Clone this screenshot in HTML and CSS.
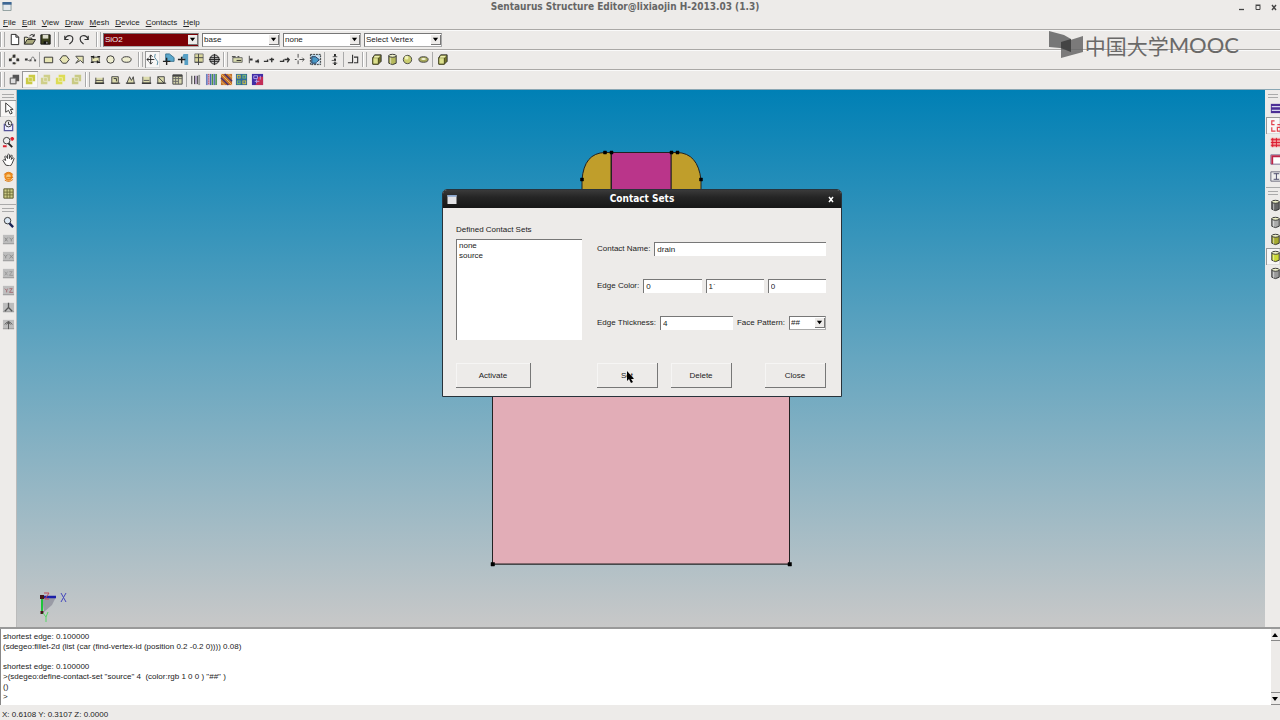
FILE: index.html
```html
<!DOCTYPE html>
<html lang="en">
<head>
<meta charset="utf-8">
<title>Sentaurus Structure Editor</title>
<link rel="stylesheet" href="styles.css">
</head>
<body>
<svg class="defs" aria-hidden="true">
  <symbol id="arrow" viewBox="0 0 8 8"><path d="M1 2h6L4 6z"/></symbol>
  <symbol id="layers" viewBox="0 0 14 14"><path d="M5 2h7v7H9v3H2V5h3z"/><path d="M5 5h4v4M5 5v4h4" fill="none" stroke="#fff" stroke-opacity=".5"/></symbol>
  <symbol id="cube" viewBox="0 0 14 14"><path d="M3 5l2-3h7v7l-3 3H3z" fill="#73752a" stroke="#333"/><path d="M3 5h6v7H3z" fill="#dce08c" stroke="#444419"/><path d="M5 3h6L9 5H4z" fill="#eef0ad"/></symbol>
  <symbol id="cylinder" viewBox="0 0 14 14"><path d="M3 3v8q4 3 8 0V3z" fill="currentColor" stroke="#333"/><ellipse cx="7" cy="3" rx="4" ry="1.6" fill="#eef0c8" stroke="#333"/><path d="M5 5v7" stroke="#fff" stroke-opacity=".6"/></symbol>
  <symbol id="plane" viewBox="0 0 14 14"><path d="M1 2h12v10H1z" fill="#bdbdbd"/><path d="M1 11.500h12" stroke="#999"/></symbol>
</svg>
<div class="app">
  <header class="titlebar">
    <svg class="winicon" viewBox="0 0 10 10"><path d="M.5.5h9v9h-9z" fill="#e4e8ec" stroke="#899"/><path d="M0 0h10v3H0z" fill="#3c6694"/></svg>
    <h1>Sentaurus Structure Editor@lixiaojin H-2013.03 (1.3)</h1>
    <div class="wincontrols">
      <button aria-label="Minimize"><svg viewBox="0 0 8 8"><path d="M1 6.500h5" stroke="#444" stroke-width="1.300"/></svg></button>
      <button aria-label="Maximize"><svg viewBox="0 0 8 8"><path d="M2 2.500h4v4H2z" fill="none" stroke="#444"/><path d="M1.500 2h5" stroke="#444"/></svg></button>
      <button aria-label="Close window"><svg viewBox="0 0 8 8"><path d="M2 2l4 5M6 2L2 7" stroke="#444" stroke-width="1.400"/></svg></button>
    </div>
  </header>
  <nav class="menubar">
    <button><u>F</u>ile</button><button><u>E</u>dit</button><button><u>V</u>iew</button><button><u>D</u>raw</button><button><u>M</u>esh</button><button><u>D</u>evice</button><button><u>C</u>ontacts</button><button><u>H</u>elp</button>
  </nav>

  <div class="toolbar">
    <span class="grip"></span>
    <div class="group n3">
      <button aria-label="New"><svg viewBox="0 0 14 14"><path d="M3.500 1.500h5l3 3v8h-8zM8.500 1.500v3h3" fill="#fff" stroke="#222"/></svg></button>
      <button aria-label="Open"><svg viewBox="0 0 14 14"><path d="M1.500 12V4.500h3l1 1h4V7" fill="#e9e7c0" stroke="#222"/><path d="M1.500 12l3-5h9l-3 5z" fill="#a9a87c" stroke="#222"/><path d="M7 3q3-3 5 0M12 1v2.500h-2" fill="none" stroke="#222"/></svg></button>
      <button aria-label="Save"><svg viewBox="0 0 14 14"><path d="M2 2h10v10H2z" fill="#3d421f" stroke="#111"/><path d="M4 2h6v4H4z" fill="#dcdccb"/><path d="M5 9h5v3H5z" fill="#111"/><path d="M8.500 9.500v2" stroke="#eee"/></svg></button>
    </div>
    <span class="grip"></span>
    <div class="group n2">
      <button aria-label="Undo"><svg viewBox="0 0 14 14"><path d="M3 3v4h4M3 7q2-5 6-4t2 6l-3 3" fill="none" stroke="#333" stroke-width="1.300"/></svg></button>
      <button aria-label="Redo"><svg viewBox="0 0 14 14"><path d="M11 3v4H7M11 7Q9 2 5 3t-2 6l3 3" fill="none" stroke="#333" stroke-width="1.300"/></svg></button>
    </div>
    <span class="grip wide"></span>
    <div class="combos">
      <span class="combo material"><select aria-label="Material"><option>SiO2</option></select><svg><use href="#arrow"/></svg></span>
      <span class="combo"><select aria-label="Region"><option>base</option></select><svg><use href="#arrow"/></svg></span>
      <span class="combo"><select aria-label="Contact set"><option>none</option></select><svg><use href="#arrow"/></svg></span>
      <span class="combo"><select aria-label="Selection mode"><option>Select Vertex</option></select><svg><use href="#arrow"/></svg></span>
    </div>
  </div>

  <div class="toolbar">
    <span class="grip"></span>
    <div class="group n2">
      <button aria-label="Vertex"><svg viewBox="0 0 14 14"><path d="M2 8l3-4M6 2h2M10 5l2 3M9 11l-2 1" stroke="#9a9a70" fill="none"/><path d="M1 6h3v3H1zM5 2h3v3H5zM9 6h3v3H9zM5 10h3v2H5z" fill="#333"/></svg></button>
      <button aria-label="Polyline"><svg viewBox="0 0 14 14"><path d="M1 7h3M6 8h2M11 8h2" stroke="#333" stroke-width="2"/><path d="M3 6q3 5 5 0t4 3" fill="none" stroke="#777"/></svg></button>
    </div>
    <span class="rule"></span>
    <div class="group n6">
      <button aria-label="Rectangle"><svg viewBox="0 0 14 14"><path d="M2.500 4.500h9v6h-9z" fill="#e7e5b4" stroke="#333"/></svg></button>
      <button aria-label="Polygon"><svg viewBox="0 0 14 14"><path d="M5 3h4l3 4-3 4H5L2 7z" fill="#e7e5b4" stroke="#333"/></svg></button>
      <button aria-label="Free polygon"><svg viewBox="0 0 14 14"><path d="M3 3.500h8V11L8 8l-5 3 3-4z" fill="#e7e5b4" stroke="#444"/></svg></button>
      <button aria-label="Region box"><svg viewBox="0 0 14 14"><path d="M3 4.500h8v5H3z" fill="#e7e5b4" stroke="#444"/><path d="M2 4h3M9 4h3M2 10h3M9 10h3M5 3v3M9 8v3" stroke="#222" stroke-width="1.300"/></svg></button>
      <button aria-label="Circle"><svg viewBox="0 0 14 14"><circle cx="7" cy="7" r="4" fill="#eeedcf" stroke="#333"/></svg></button>
      <button aria-label="Ellipse"><svg viewBox="0 0 14 14"><ellipse cx="7" cy="7" rx="5" ry="3" fill="#eeedcf" stroke="#333"/></svg></button>
    </div>
    <span class="grip wide"></span>
    <div class="group n5">
      <button class="on" aria-label="Move point"><svg viewBox="0 0 14 14"><path d="M1 7h8M5 3v8M3 5l-2 2 2 2M4 4l1-2 2 2M4 10l1 2 2-2" fill="none" stroke="#222"/><path d="M10 1q-2 4 1 6t1 6" fill="none" stroke="#5089a2"/></svg></button>
      <button aria-label="Move shape"><svg viewBox="0 0 14 14"><path d="M4 1h4l5 4v4H4z" fill="#5ba8cc" stroke="#38718f"/><path d="M1 9h8M5 5v8" stroke="#222" stroke-width="1.500"/></svg></button>
      <button aria-label="Move edge"><svg viewBox="0 0 14 14"><path d="M7 1h5v12H8V6H5z" fill="#579fc4"/><path d="M1 7h8M5 4v7" stroke="#222" stroke-width="1.500"/></svg></button>
      <button aria-label="Move grid"><svg viewBox="0 0 14 14"><path d="M3 1h9v9H3z" fill="#d9d69c" stroke="#777"/><path d="M3 5h9M7 1v9M3 10h8M7 6v7" stroke="#444"/></svg></button>
      <button aria-label="Move all"><svg viewBox="0 0 14 14"><circle cx="7" cy="7" r="5" fill="#bbb" stroke="#222"/><path d="M1 7h12M7 1v12M2 5h10M2 9h10" stroke="#222"/></svg></button>
    </div>
    <span class="grip"></span>
    <div class="group n6">
      <button aria-label="Split"><svg viewBox="0 0 14 14"><path d="M2 5h10v5H2z" fill="#d8dbad" stroke="#666"/><path d="M1 4h4M7 4h2M6 8h5" stroke="#222"/></svg></button>
      <button aria-label="Extend"><svg viewBox="0 0 14 14"><path d="M2.500 3v8" stroke="#444"/><path d="M3 7h3M9 9h4" stroke="#333" stroke-width="2"/><path d="M10 10l2-3v4" fill="none" stroke="#333"/></svg></button>
      <button aria-label="Trim"><svg viewBox="0 0 14 14"><path d="M2 9h4V7M8 7h5M10.500 5v5" fill="none" stroke="#333" stroke-width="1.500"/></svg></button>
      <button aria-label="Join"><svg viewBox="0 0 14 14"><path d="M2 9h4V7M7 7h5M10 5l2 2-2 3" fill="none" stroke="#333" stroke-width="1.500"/></svg></button>
      <button aria-label="Break"><svg viewBox="0 0 14 14"><path d="M5.500 1v4M5.500 8v4M2 7h2M7 7h5M10 5l2 2-2 2" fill="none" stroke="#444"/></svg></button>
      <button aria-label="Select area"><svg viewBox="0 0 14 14"><path d="M1.500 1.500h11v11h-11z" fill="#b8d5e5" stroke="#333" stroke-dasharray="2 1"/><path d="M3 4h4l4 3-3 4H3z" fill="#4998c6" stroke="#235"/><path d="M8 3l3 3M11 9l-3 2" stroke="#eef"/></svg></button>
    </div>
    <span class="rule"></span>
    <div class="group n1"><button aria-label="Align vertical"><svg viewBox="0 0 14 14"><path d="M7.500 1v3M7.500 6v3M7.500 10v3" stroke="#222" stroke-width="2"/><path d="M5 4h5M4 8h4M5 11h5" stroke="#555"/></svg></button></div>
    <span class="rule"></span>
    <div class="group n1"><button aria-label="Offset"><svg viewBox="0 0 14 14"><path d="M1 10.500h5V2M7.500 4.500h4v6h-4" fill="none" stroke="#333" stroke-width="1.200"/></svg></button></div>
    <span class="grip"></span>
    <div class="group n4">
      <button aria-label="Cuboid"><svg><use href="#cube"/></svg></button>
      <button class="olive" aria-label="Cylinder"><svg><use href="#cylinder"/></svg></button>
      <button aria-label="Sphere"><svg viewBox="0 0 14 14"><circle cx="7" cy="7" r="4.500" fill="#c9cc6f" stroke="#444"/><circle cx="6" cy="5" r="2" fill="#f1f2b9"/></svg></button>
      <button aria-label="Torus"><svg viewBox="0 0 14 14"><ellipse cx="7" cy="7" rx="5" ry="3" fill="#a6a85a" stroke="#444"/><ellipse cx="7" cy="6.500" rx="2.500" ry="1" fill="#f4f4d8"/></svg></button>
    </div>
    <span class="rule"></span>
    <div class="group n1"><button aria-label="Extrude"><svg><use href="#cube"/></svg></button></div>
  </div>

  <div class="toolbar">
    <span class="grip"></span>
    <div class="group n5">
      <button class="l1" aria-label="No overlap"><svg viewBox="0 0 14 14"><path d="M5 2h7v7H9v3H2V5h3z" fill="#555"/><path d="M2.500 5.500h6v6h-6z" fill="#ddd" stroke="#666"/></svg></button>
      <button class="l2 on" aria-label="New replaces old"><svg><use href="#layers"/></svg></button>
      <button class="l3" aria-label="Old replaces new"><svg><use href="#layers"/></svg></button>
      <button class="l4" aria-label="Merge"><svg><use href="#layers"/></svg></button>
      <button class="l5" aria-label="Intersect"><svg><use href="#layers"/></svg></button>
    </div>
    <span class="grip"></span>
    <div class="group n6">
      <button aria-label="Refinement line"><svg viewBox="0 0 14 14"><path d="M3 5v6h8V5M3 8h8" fill="#dddcae" stroke="#444"/><path d="M2 11h10" stroke="#333" stroke-width="1.500"/></svg></button>
      <button aria-label="Refinement window"><svg viewBox="0 0 14 14"><path d="M3 4h7v7H3z" fill="#dddcae" stroke="#444"/><path d="M5 6h3v3M2 11h10" fill="none" stroke="#333"/></svg></button>
      <button aria-label="Refinement polygon"><svg viewBox="0 0 14 14"><path d="M3 11l3-7 2 4 2-4 1 7z" fill="#dddcae" stroke="#444"/><path d="M2 11h10" stroke="#333"/></svg></button>
      <button aria-label="Placement line"><svg viewBox="0 0 14 14"><path d="M3 4v7h8V4M4 8h6" fill="#dddcae" stroke="#555"/><path d="M2 11h10" stroke="#333" stroke-width="1.500"/></svg></button>
      <button aria-label="Placement window"><svg viewBox="0 0 14 14"><path d="M3 4h7v7H3zM3 4l7 7" fill="#dddcae" stroke="#444"/><path d="M2 11h10" stroke="#333"/></svg></button>
      <button aria-label="Table"><svg viewBox="0 0 14 14"><path d="M2 2h10v10H2z" fill="#d5d5ae" stroke="#444"/><path d="M2 3h10" stroke="#444" stroke-width="2"/><path d="M2 6h10M2 9h6M5 4v8M8 4v8" stroke="#666"/></svg></button>
    </div>
    <span class="rule"></span>
    <div class="group n5">
      <button aria-label="Line doping"><svg viewBox="0 0 14 14"><path d="M3 3v9M6 3v9M9 3v9" stroke="#333"/><path d="M7.500 3v9" stroke="#86a"/><path d="M11 2v11" stroke="#999" stroke-width="2"/></svg></button>
      <button aria-label="Constant profile"><svg viewBox="0 0 14 14"><path d="M1 1h12v12H1z" fill="#c4b4da"/><path d="M2 1v12M6 1v12M10 1v12" stroke="#2e5fae"/><path d="M4 1v12" stroke="#c33" stroke-dasharray="1 1"/><path d="M8 1v12M12 1v12" stroke="#449944" stroke-width="1.500"/></svg></button>
      <button aria-label="Analytic profile"><svg viewBox="0 0 14 14"><path d="M1 1h12v12H1z" fill="#c4702c"/><path d="M1 5l8 8M5 1l8 8" stroke="#443170" stroke-width="1.500"/><path d="M1 1l12 12M9 1l4 4M1 9l4 4" stroke="#ecc06a"/></svg></button>
      <button aria-label="External profile"><svg viewBox="0 0 14 14"><path d="M1 1h12v12H1z" fill="#2e6b9b"/><path d="M2 2h4v4H2zM8 8h4v4H8z" fill="#d8c33a"/><path d="M8 2h4v4H8zM2 8h4v4H2z" fill="#7cc064"/><path d="M3 3h2v2H3zM9 3h2v2H9zM3 9h2v2H3zM9 9h2v2H9z" fill="#3c71b8"/></svg></button>
      <button aria-label="Profile view"><svg viewBox="0 0 14 14"><path d="M1 1h12v12H1z" fill="#402da5"/><path d="M8 4h5v9H5z" fill="#c32e57"/><path d="M3 3h4v3H3zM4 9h5M6 7v4M10 3v4" fill="none" stroke="#b9a3e8"/></svg></button>
    </div>
  </div>

  <main class="workspace">
    <aside class="side">
      <span class="hgrip"></span>
      <button class="on" aria-label="Select"><svg viewBox="0 0 14 14"><path d="M4 1v10l3-2 2 4 2-1-2-4h3z" fill="#fff" stroke="#333"/></svg></button>
      <button aria-label="Rotate"><svg viewBox="0 0 14 14"><path d="M2.500 5v7.500h9V5" fill="#eef" stroke="#54529a" stroke-width="1.300"/><circle cx="7" cy="5" r="3.500" fill="none" stroke="#333"/><path d="M7 3v3h2" fill="none" stroke="#333"/></svg></button>
      <button aria-label="Zoom"><svg viewBox="0 0 14 14"><circle cx="5" cy="5" r="3.500" fill="#eee" stroke="#333"/><path d="M7 8l4 4" stroke="#222" stroke-width="2"/><path d="M9 3h4M11 1v4M1 11h4" stroke="#dc2230" stroke-width="2"/></svg></button>
      <button aria-label="Pan"><svg viewBox="0 0 14 14"><path d="M4 13L1 8l1-1 2 1L3 4l1-1 2 3V2l1-1 1 1v4l2-4 1 1-1 4 2-2 1 1-2 5-2 3z" fill="#fff" stroke="#333"/></svg></button>
      <button aria-label="Orbit"><svg viewBox="0 0 14 14"><circle cx="7" cy="7" r="3.500" fill="#f7c779" stroke="#ef8a1b" stroke-width="2"/><path d="M2 5q5-5 10 0M5 8h7M3 11q5 3 9-1" fill="none" stroke="#d97911"/></svg></button>
      <button aria-label="Grid"><svg viewBox="0 0 14 14"><path d="M2 2h10v10H2z" fill="#cccb87" stroke="#555527"/><path d="M2 5.500h10M2 8.500h10M5.500 2v10M8.500 2v10" stroke="#6d6c38"/></svg></button>
      <span class="hrule"></span>
      <span class="hgrip"></span>
      <button aria-label="Zoom extents"><svg viewBox="0 0 14 14"><circle cx="6" cy="5" r="3.500" fill="#dce8f4" stroke="#333"/><path d="M8 8l4 4" stroke="#1c2455" stroke-width="2.500"/></svg></button>
      <button aria-label="View XY"><svg viewBox="0 0 14 14"><use href="#plane"/><path d="M3 5l3 4M6 5L3 9M8 5l2 2 2-2M10 7v2" fill="none" stroke="#888"/></svg></button>
      <button aria-label="View YX"><svg viewBox="0 0 14 14"><use href="#plane"/><path d="M2 5l2 2 2-2M4 7v2M8 5l4 4M12 5L8 9" fill="none" stroke="#888"/></svg></button>
      <button aria-label="View XZ"><svg viewBox="0 0 14 14"><use href="#plane"/><path d="M3 5l3 4M6 5L3 9M8 5h3L8 9h4" fill="none" stroke="#999"/></svg></button>
      <button aria-label="View YZ"><svg viewBox="0 0 14 14"><use href="#plane"/><path d="M3 5l2 2 1-2M5 7v2M8 5h3L8 9h4" fill="none" stroke="#a46b73"/></svg></button>
      <button aria-label="Isometric view"><svg viewBox="0 0 14 14"><use href="#plane"/><path d="M7 2v5l-4 4M7 7l4 4" fill="none" stroke="#555" stroke-width="1.400"/></svg></button>
      <button aria-label="Normal view"><svg viewBox="0 0 14 14"><use href="#plane"/><path d="M7 4v8M3 7q4-6 8 0M5 7l2-3 2 3" fill="none" stroke="#555"/></svg></button>
    </aside>

    <section class="canvas" aria-label="Device view">
      <svg class="device" viewBox="490 148 302 420">
        <path d="M492.500 190h297v374h-297z" fill="#e2adb7" stroke="#222"/>
        <path d="M582 300V180Q584 153 605 152.500h6V300z" fill="#c09e2b" stroke="#222"/>
        <path d="M701 300V180Q698 153 677 152.500h-6V300z" fill="#c09e2b" stroke="#222"/>
        <path d="M611.500 152.500h59.500V300h-59.500z" fill="#ba358a" stroke="#222"/>
        <path d="M492.500 300h297v264h-297z" fill="#e2adb7"/>
        <path d="M492.500 300v264h297V300" fill="none" stroke="#222"/>
        <path d="M603.500 151h3v3h-3zM610 151h3v3h-3zM670 151h3v3h-3zM676 151h3v3h-3zM580.500 178h3v3h-3zM699.500 178h3v3h-3zM491 562.500h3.500v3.500H491zM788 562.500h3.500v3.500H788z" stroke="#000" stroke-width=".5"/>
      </svg>
      <svg class="axes" viewBox="0 0 34 34">
        <path d="M5 8h14l-4 8-8 7z" fill="#999ba5"/>
        <path d="M3 8h16" stroke="#1b1fa8" stroke-width="2.500"/>
        <path d="M5 9v14" stroke="#1fc43c" stroke-width="2"/>
        <path d="M3 6h4v4H3zM3.500 22h3v3h-3z" fill="#431818"/>
        <path d="M7 4h5L8 10h4" fill="none" stroke="#c04a5a"/>
        <path d="M24 4l5 9M29 4l-5 9" stroke="#4447bd"/>
        <path d="M6 24l3 4 2-5M9 28v5" fill="none" stroke="#57d665"/>
      </svg>

      <form class="dialog" role="dialog" aria-labelledby="dlg-title" onsubmit="return false">
        <div class="dlg-title">
          <svg class="winicon" viewBox="0 0 10 10"><path d="M0 0h10v10H0z" fill="#e3e3e6"/><path d="M0 0h10v2H0z" fill="#8ba7cf"/></svg>
          <h2 id="dlg-title">Contact Sets</h2>
          <button type="button" aria-label="Close dialog"><svg viewBox="0 0 8 8"><path d="M2 2l4 5M6 2L2 7" stroke="#fff" stroke-width="1.500"/></svg></button>
        </div>
        <div class="dlg-body">
          <div class="sets">
            <label for="sets">Defined Contact Sets</label>
            <select id="sets" size="8"><option>none</option><option>source</option></select>
          </div>
          <div class="fields">
            <div class="row"><label for="cname">Contact Name:</label><input id="cname" value="drain"></div>
            <div class="row"><label for="red">Edge Color:</label><input id="red" value="0"><input aria-label="Green" value="1`"><input aria-label="Blue" value="0"></div>
            <div class="row"><label for="thick">Edge Thickness:</label><input id="thick" value="4"><label for="pattern">Face Pattern:</label><span class="combo pattern"><select id="pattern"><option>##</option></select><svg><use href="#arrow"/></svg></span></div>
          </div>
          <div class="sets"><button class="push activate" type="button">Activate</button></div>
          <div class="actions">
            <button class="push" type="button">Set<svg class="cursor" viewBox="0 0 8 12"><path d="M1 0v10l2-2 2 4 2-1-2-3h3z"/></svg></button>
            <button class="push" type="button">Delete</button>
            <button class="push last" type="button">Close</button>
          </div>
        </div>
      </form>
    </section>

    <aside class="side right">
      <span class="hgrip"></span>
      <button aria-label="Material list"><svg viewBox="0 0 14 14"><path d="M2 2h12v10H2z" fill="#4b2e94"/><path d="M3 5h9M3 9h9" stroke="#d5d5ee" stroke-width="1.500"/></svg></button>
      <button class="on" aria-label="Labels"><svg viewBox="0 0 14 14"><path d="M6 2H3v4h3M3 9v4h4M9 6h4v3H9v4h4" fill="none" stroke="#e2414c" stroke-width="1.300"/></svg></button>
      <button aria-label="Mesh"><svg viewBox="0 0 14 14"><path d="M2 2h12v10H2z" fill="#f29a9a"/><path d="M2 4h12M2 7h12M2 10h12M4 2v10M8 2v10" stroke="#d9182f"/></svg></button>
      <button aria-label="Frame"><svg viewBox="0 0 14 14"><path d="M2 2h11v10H2z" fill="#fff" stroke="#77668e"/><path d="M3.500 12V3.500H13" fill="none" stroke="#bd2447" stroke-width="2"/></svg></button>
      <button aria-label="Ruler"><svg viewBox="0 0 14 14"><path d="M2 2h12v10H2z" fill="#eee" stroke="#667"/><path d="M5 4h6M8 4v6M5 10h6" stroke="#446"/></svg></button>
      <span class="hrule"></span>
      <span class="hgrip"></span>
      <button class="c1" aria-label="Wireframe"><svg><use href="#cylinder"/></svg></button>
      <button class="c2" aria-label="Hidden line"><svg><use href="#cylinder"/></svg></button>
      <button class="c3" aria-label="Shaded edges"><svg><use href="#cylinder"/></svg></button>
      <button class="c4 on" aria-label="Shaded"><svg><use href="#cylinder"/></svg></button>
      <button class="c5" aria-label="Transparent"><svg><use href="#cylinder"/></svg></button>
    </aside>
  </main>

  <section class="console">
    <textarea aria-label="Command window" spellcheck="false">shortest edge: 0.100000
(sdegeo:fillet-2d (list (car (find-vertex-id (position 0.2 -0.2 0)))) 0.08)

shortest edge: 0.100000
&gt;(sdegeo:define-contact-set "source" 4  (color:rgb 1 0 0 ) "##" )
()
&gt;</textarea>
    <div class="scroll">
      <button class="up" aria-label="Scroll up"><svg><use href="#arrow"/></svg></button>
      <span class="thumb"></span>
      <button aria-label="Scroll down"><svg><use href="#arrow"/></svg></button>
    </div>
  </section>
  <footer class="status">X: 0.6108 Y: 0.3107 Z: 0.0000</footer>

  <div class="brand">
    <svg viewBox="0 0 34 28"><path d="M0 0l15 4 7 4v13L11 17 0 16z" fill="#777"/><path d="M34 5v16l-22 6V12z" fill="#666" fill-opacity=".85"/><path d="M12 11l10-3v13l-10-4z" fill="#444"/></svg>
    <span class="cjk" lang="zh">中国大学</span><span class="latin">MOOC</span>
  </div>
</div>
</body>
</html>
```
FILE: styles.css
```css
* { box-sizing: border-box; }

body {
  margin: 0;
  background: #edebe9;
  color: #222;
  font: 8px/10px "Liberation Sans", sans-serif;
}

button, input, select, textarea {
  margin: 0;
  padding: 0;
  border: 0;
  border-radius: 0;
  background: none;
  color: inherit;
  font: inherit;
  outline: 0;
}

h1, h2 {
  margin: 0;
  font-family: "DejaVu Sans Condensed", "DejaVu Sans", sans-serif;
  font-size: 10px;
  font-weight: bold;
}

svg { display: block; }
.defs { display: none; }

.app {
  position: relative;
  display: flex;
  flex-direction: column;
  height: 100vh;
  overflow: hidden;
}

.titlebar {
  display: flex;
  align-items: center;
  height: 13px;
  flex: none;
  padding: 0 2px;
}
.titlebar h1 {
  flex: 1;
  text-align: center;
  line-height: 12px;
  color: #666;
}
.winicon { width: 10px; height: 9px; }
.wincontrols { display: flex; gap: 8px; }
.wincontrols button, .wincontrols svg { width: 8px; height: 8px; }

.menubar {
  display: flex;
  align-items: flex-start;
  gap: 6px;
  height: 16px;
  flex: none;
  padding: 5px 3px 0;
}

.toolbar {
  display: flex;
  align-items: center;
  height: 20px;
  flex: none;
  border-top: 1px solid #aaa8a6;
  box-shadow: inset 0 1px #fafafa;
}
.grip {
  width: 5px;
  height: 15px;
  margin: 0 2px 0 1px;
  border: solid #aaa;
  border-width: 0 1px;
  box-shadow: inset 1px 0 #fff;
}
.grip:first-child { margin-left: 0; }
.grip.wide { margin-left: 4px; }
.rule { width: 1px; height: 15px; margin: 0 1px; background: #aaa; }

.group { display: flex; }
.group button {
  display: flex;
  flex: 1;
  align-items: center;
  justify-content: center;
  height: 17px;
}
.group svg { width: 13px; height: 13px; }
.n1 { width: 16px; }
.n2 { width: 31px; }
.n3 { width: 46px; }
.n4 { width: 62px; }
.n5 { width: 77px; }
.n6 { width: 93px; }
.on { background: #f8f7f6; box-shadow: inset 1px 1px #999, inset -1px -1px #ddd; }
.olive { color: #b5b85c; }
.l2 { fill: #cbcb45; }
.l3 { fill: #cfcf8a; }
.l4 { fill: #dddc56; }
.l5 { fill: #c9ca84; }

.combos { display: flex; gap: 3px; }
.combo {
  position: relative;
  width: 78px;
  height: 14px;
  border: 1px solid #777;
  border-right-color: #aaa;
  border-bottom-color: #aaa;
  background: #fff;
}
.combo select {
  display: block;
  appearance: none;
  width: 100%;
  height: 12px;
  padding-left: 1px;
}
.combo svg {
  position: absolute;
  top: 1px;
  right: 0;
  width: 10px;
  height: 10px;
  padding: 1px;
  background: #edebe9;
  border-right: 1px solid #777;
  border-bottom: 1px solid #777;
  pointer-events: none;
}
.combo.material { width: 96px; }
.material select { background: #7b0005; color: #eee; }

.workspace {
  display: flex;
  flex: 1;
  min-height: 0;
  border-top: 1px solid #8aa7b4;
}
.side {
  display: flex;
  flex-direction: column;
  flex: none;
  width: 17px;
  padding: 4px 0 0;
  border-right: 1px solid #bbb;
}
.side button {
  display: flex;
  align-items: center;
  justify-content: center;
  height: 17px;
}
.side svg { width: 13px; height: 13px; flex: none; }
.side.right {
  width: 15px;
  padding: 4px 0 0 1px;
  border: 0;
  overflow: hidden;
}
.right button { justify-content: flex-start; padding-left: 3px; }
.hgrip {
  height: 4px;
  margin: 0 2px 2px;
  border: solid #aaa;
  border-width: 1px 0;
}
.hrule { height: 1px; margin: 2px 0 3px; background: #aaa; }
.c1 { color: #666; }
.c2 { color: #aaa; }
.c3 { color: #a5aa30; }
.c4 { color: #cbd935; }
.c5 { color: #999; }

.canvas {
  position: relative;
  display: flex;
  flex: 1;
  justify-content: center;
  align-items: flex-start;
  padding-top: 58px;
  background: linear-gradient(#0080b5, #66a6c0 50%, #c8c8c8);
  overflow: hidden;
}
.device { width: 302px; height: 420px; flex: none; }
.axes { position: absolute; left: 20px; bottom: 4px; width: 34px; height: 34px; }

.dialog {
  position: absolute;
  top: 99px;
  left: 2px;
  right: 0;
  width: 400px;
  margin: 0 auto;
  border: 1px solid #28333b;
  border-radius: 5px 5px 0 0;
  background: #edebe9;
  overflow: hidden;
}
.dlg-title {
  display: flex;
  align-items: center;
  height: 18px;
  padding: 0 6px 0 4px;
  background: linear-gradient(#3a3a3a, #252525 40%, #171717);
  color: #fff;
}
.dlg-title h2 { flex: 1; text-align: center; line-height: 14px; }
.dlg-title button, .dlg-title button svg { width: 8px; height: 8px; }

.dlg-body {
  display: grid;
  grid-template-columns: 126px minmax(0, 1fr);
  column-gap: 15px;
  row-gap: 23px;
  padding: 17px 15px 8px 13px;
}
.sets { display: flex; flex-direction: column; align-items: flex-start; gap: 4px; }
.sets select {
  width: 100%;
  height: 101px;
  padding-top: 1px;
  border: solid #777;
  border-width: 1px 0 0 1px;
  background: #fff;
  overflow: hidden;
}
.sets option { min-height: 10px; padding: 0 2px; line-height: 10px; }

.fields { display: flex; flex-direction: column; gap: 23px; padding-top: 17px; }
.row { display: flex; align-items: center; gap: 4px; height: 14px; }
.row label { flex: none; }
.row input {
  flex: 1;
  width: 0;
  height: 14px;
  padding: 0 0 0 2px;
  border: solid #777;
  border-width: 1px 0 0 1px;
  background: #fff;
}
.combo.pattern { width: 37px; flex: none; }

.actions { display: flex; gap: 13px; }
.push {
  position: relative;
  width: 61px;
  height: 25px;
  padding-top: 1px;
  border: solid #777;
  border-width: 0 1px 1px 0;
  box-shadow: inset 1px 1px #f6f5f4;
}
.activate { width: 75px; }
.last { margin-left: auto; }
.cursor { position: absolute; left: 29px; top: 8px; width: 8px; height: 12px; }

.console {
  display: flex;
  flex: none;
  height: 78px;
  border-top: 2px solid #999;
  background: #fff;
}
.console textarea {
  flex: 1;
  resize: none;
  overflow: hidden;
  padding: 3px 2px 0;
  border-left: 1px solid #888;
  white-space: pre;
}
.scroll { display: flex; flex-direction: column; width: 9px; background: #edebe9; }
.scroll button { height: 12px; border-bottom: 1px solid #888; }
.scroll svg { width: 8px; height: 8px; }
.up svg { transform: rotate(180deg); }
.thumb { flex: 1; border-bottom: 1px solid #888; }

.status { flex: none; height: 15px; padding: 5px 2px 0; }

.brand {
  position: absolute;
  top: 31px;
  right: 41px;
  display: flex;
  align-items: center;
  height: 28px;
  color: #6a6968;
}
.brand svg { width: 34px; height: 28px; margin-right: 2px; }
.cjk { font: 400 21px/28px "Noto Sans CJK SC", sans-serif; }
.latin { font: 400 22px/28px Lato, sans-serif; }
```
